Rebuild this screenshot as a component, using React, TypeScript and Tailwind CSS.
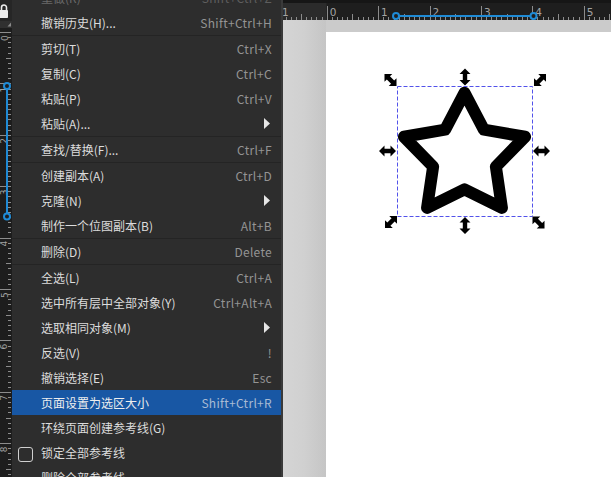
import React from "react";

type Item = {
  label?: string;
  sc?: string;
  sub?: boolean;
  sep?: boolean;
  hl?: boolean;
  check?: boolean;
  dim?: boolean;
};

const items: Item[] = [
  { label: "重做(R)", sc: "Shift+Ctrl+Z", dim: true },
  { label: "撤销历史(H)...", sc: "Shift+Ctrl+H" },
  { sep: true },
  { label: "剪切(T)", sc: "Ctrl+X" },
  { label: "复制(C)", sc: "Ctrl+C" },
  { label: "粘贴(P)", sc: "Ctrl+V" },
  { label: "粘贴(A)...", sub: true },
  { sep: true },
  { label: "查找/替换(F)...", sc: "Ctrl+F" },
  { sep: true },
  { label: "创建副本(A)", sc: "Ctrl+D" },
  { label: "克隆(N)", sub: true },
  { label: "制作一个位图副本(B)", sc: "Alt+B" },
  { sep: true },
  { label: "删除(D)", sc: "Delete" },
  { sep: true },
  { label: "全选(L)", sc: "Ctrl+A" },
  { label: "选中所有层中全部对象(Y)", sc: "Ctrl+Alt+A" },
  { label: "选取相同对象(M)", sub: true },
  { label: "反选(V)", sc: "!" },
  { label: "撤销选择(E)", sc: "Esc" },
  { label: "页面设置为选区大小", sc: "Shift+Ctrl+R", hl: true },
  { label: "环绕页面创建参考线(G)" },
  { label: "锁定全部参考线", check: true },
  { label: "删除全部参考线" },
];

const UNIT = 51.4;
const STEP = UNIT / 10;

function TopRuler() {
  const ticks: React.ReactNode[] = [];
  const x0 = 326.7;
  for (let k = -10; k <= 60; k++) {
    const x = Math.round(x0 + k * STEP) + 0.5;
    if (x < 283 || x > 611) continue;
    const y1 = k % 10 === 0 ? 6 : k % 5 === 0 ? 14 : 17;
    ticks.push(<line key={k} x1={x} x2={x} y1={y1} y2={20} stroke="#8c8c8c" strokeWidth={1} />);
  }
  const labels: React.ReactNode[] = [];
  for (let n = -1; n <= 5; n++) {
    const x = x0 + n * UNIT + 3;
    labels.push(
      <text key={n} x={x} y={15.5} fontSize={10.5} fill="#a3a3a3" fontFamily="DejaVu Sans, sans-serif">
        {n}
      </text>
    );
  }
  return (
    <svg width={328} height={17} viewBox="283 3 328 17" className="block">
      <rect x={283} y={3} width={43.7} height={17} fill="#2b2b2b" />
      <rect x={326.7} y={3} width={290} height={17} fill="#1e1e1e" />
      {ticks}
      {labels}
      <line x1={396} x2={533.5} y1={16} y2={16} stroke="#1f8bd6" strokeWidth={2} />
      <circle cx={396} cy={16} r={3} fill="#1e1e1e" stroke="#1f8bd6" strokeWidth={2} />
      <circle cx={533.5} cy={16} r={3} fill="#1e1e1e" stroke="#1f8bd6" strokeWidth={2} />
    </svg>
  );
}

function LeftRuler() {
  const ticks: React.ReactNode[] = [];
  const y0 = 32;
  for (let k = -1; k <= 90; k++) {
    const y = Math.round(y0 + k * STEP) + 0.5;
    if (y < 28 || y > 477) continue;
    const x1 = k % 10 === 0 ? 0 : k % 5 === 0 ? 6 : 8;
    ticks.push(<line key={k} x1={x1} x2={11} y1={y} y2={y} stroke="#8c8c8c" strokeWidth={1} />);
  }
  const labels: React.ReactNode[] = [];
  for (let n = 0; n <= 8; n++) {
    const y = y0 + n * UNIT + 9;
    labels.push(
      <text
        key={n}
        x={7.5}
        y={y}
        transform={`rotate(-90 7.5 ${y})`}
        fontSize={9}
        fill="#a3a3a3"
        fontFamily="DejaVu Sans, sans-serif"
      >
        {n}
      </text>
    );
  }
  return (
    <svg width={12} height={477} viewBox="0 0 12 477" className="block">
      <rect x={0} y={0} width={12} height={21} fill="#262626" />
      <rect x={0} y={21} width={12} height={7} fill="#303030" />
      <rect x={0} y={28} width={12} height={449} fill="#1d1d1d" />
      {/* lock */}
      <path d="M1.5 10 V7.5 A2.5 2.5 0 0 1 6.5 7.5 V10" fill="none" stroke="#ececec" strokeWidth={1.6} />
      <rect x={-1} y={10} width={9} height={8} rx={0.8} fill="#ececec" />
      <path d="M11 22.5 L11 26.5 L7.5 26.5 Z" fill="#8a8a8a" />
      {ticks}
      {labels}
      <line x1={7} x2={7} y1={86} y2={216.5} stroke="#1f8bd6" strokeWidth={2} />
      <circle cx={7} cy={86} r={3} fill="#1d1d1d" stroke="#1f8bd6" strokeWidth={2} />
      <circle cx={7} cy={216.5} r={3} fill="#1d1d1d" stroke="#1f8bd6" strokeWidth={2} />
    </svg>
  );
}

function Arrow({ x, y, rot }: { x: number; y: number; rot: number }) {
  return (
    <path
      d="M0,-8.5 L5.5,-3 L2.2,-3 L2.2,3 L5.5,3 L0,8.5 L-5.5,3 L-2.2,3 L-2.2,-3 L-5.5,-3 Z"
      fill="#000"
      transform={`translate(${x} ${y}) rotate(${rot})`}
    />
  );
}

function Drawing() {
  const cx = 464.5;
  const cy = 156.4;
  const R = 63.7;
  const r = 33;
  const pts: string[] = [];
  for (let i = 0; i < 10; i++) {
    const a = ((-90 + i * 36) * Math.PI) / 180;
    const rad = i % 2 === 0 ? R : r;
    pts.push(`${(cx + rad * Math.cos(a)).toFixed(2)},${(cy + rad * Math.sin(a)).toFixed(2)}`);
  }
  return (
    <svg
      width={328}
      height={477}
      viewBox="283 0 328 477"
      className="pointer-events-none absolute left-0 top-0"
    >
      <polygon points={pts.join(" ")} fill="#fff" stroke="#000" strokeWidth={12} strokeLinejoin="round" />
      <rect
        x={397.5}
        y={86.5}
        width={135}
        height={130}
        fill="none"
        stroke="#5252ea"
        strokeWidth={1}
        strokeDasharray="4 2"
      />
      <Arrow x={390.5} y={80} rot={-45} />
      <Arrow x={465} y={77} rot={0} />
      <Arrow x={540} y={80} rot={45} />
      <Arrow x={387.5} y={151} rot={90} />
      <Arrow x={541.5} y={151} rot={90} />
      <Arrow x={391} y={222} rot={45} />
      <Arrow x={465} y={225.5} rot={0} />
      <Arrow x={538.5} y={222.5} rot={-45} />
    </svg>
  );
}

function Menu() {
  return (
    <div className="h-[477px] w-[269px] shrink-0 overflow-hidden bg-[#2d2d2d] [font-family:'Noto_Sans_CJK_SC','Noto_Sans',sans-serif] text-[12px] leading-none">
      <div className="-mt-[15px] flex flex-col">
        {items.map((it, i) => {
          if (it.sep) return <div key={i} className="h-px shrink-0 bg-[#242424]" />;
          const labelColor = it.dim ? "text-[#6a6a6a]" : it.hl ? "text-[#eeeeee]" : "text-[#dcdcdc]";
          const scColor = it.dim ? "text-[#5e5e5e]" : it.hl ? "text-[#a9bbd4]" : "text-[#949494]";
          return (
            <div
              key={i}
              className={`flex h-[25px] shrink-0 items-center pl-[6px] pr-[9px] ${it.hl ? "bg-[#1857a4]" : ""}`}
            >
              <div className="flex w-[23px] shrink-0 items-center">
                {it.check && (
                  <div className="mt-[4px] h-[15px] w-[15px] rounded-[3px] border border-[#cfcfcf]" />
                )}
              </div>
              <span className={`flex-1 whitespace-nowrap ${labelColor}`}>{it.label}</span>
              {it.sc && (
                <span className={`whitespace-nowrap tracking-[0.3px] ${scColor}`}>{it.sc}</span>
              )}
              {it.sub && (
                <svg width={6} height={11} viewBox="0 0 6 11" className="mr-[2px] block">
                  <path d="M0 0 L6 5.5 L0 11 Z" fill="#e6e6e6" />
                </svg>
              )}
            </div>
          );
        })}
      </div>
    </div>
  );
}

export default function App() {
  return (
    <div className="flex h-[477px] w-[611px] overflow-hidden bg-[#1d1d1d]">
      <div className="w-[12px] shrink-0">
        <LeftRuler />
      </div>
      <Menu />
      <div className="w-[2px] shrink-0 bg-[#3a3a3a]" />
      <div className="relative flex w-[328px] shrink-0 flex-col">
        <div className="h-[3px] shrink-0 bg-[#161616]" />
        <TopRuler />
        <div className="flex flex-1">
          <div className="w-[43px] shrink-0 bg-gradient-to-r from-[#d5d5d5] via-[#d0d0d0] to-[#c5c5c5]" />
          <div className="flex flex-1 flex-col">
            <div className="h-[12px] shrink-0 bg-[#cbcbcb]" />
            <div className="flex-1 bg-white" />
          </div>
        </div>
        <Drawing />
      </div>
    </div>
  );
}
